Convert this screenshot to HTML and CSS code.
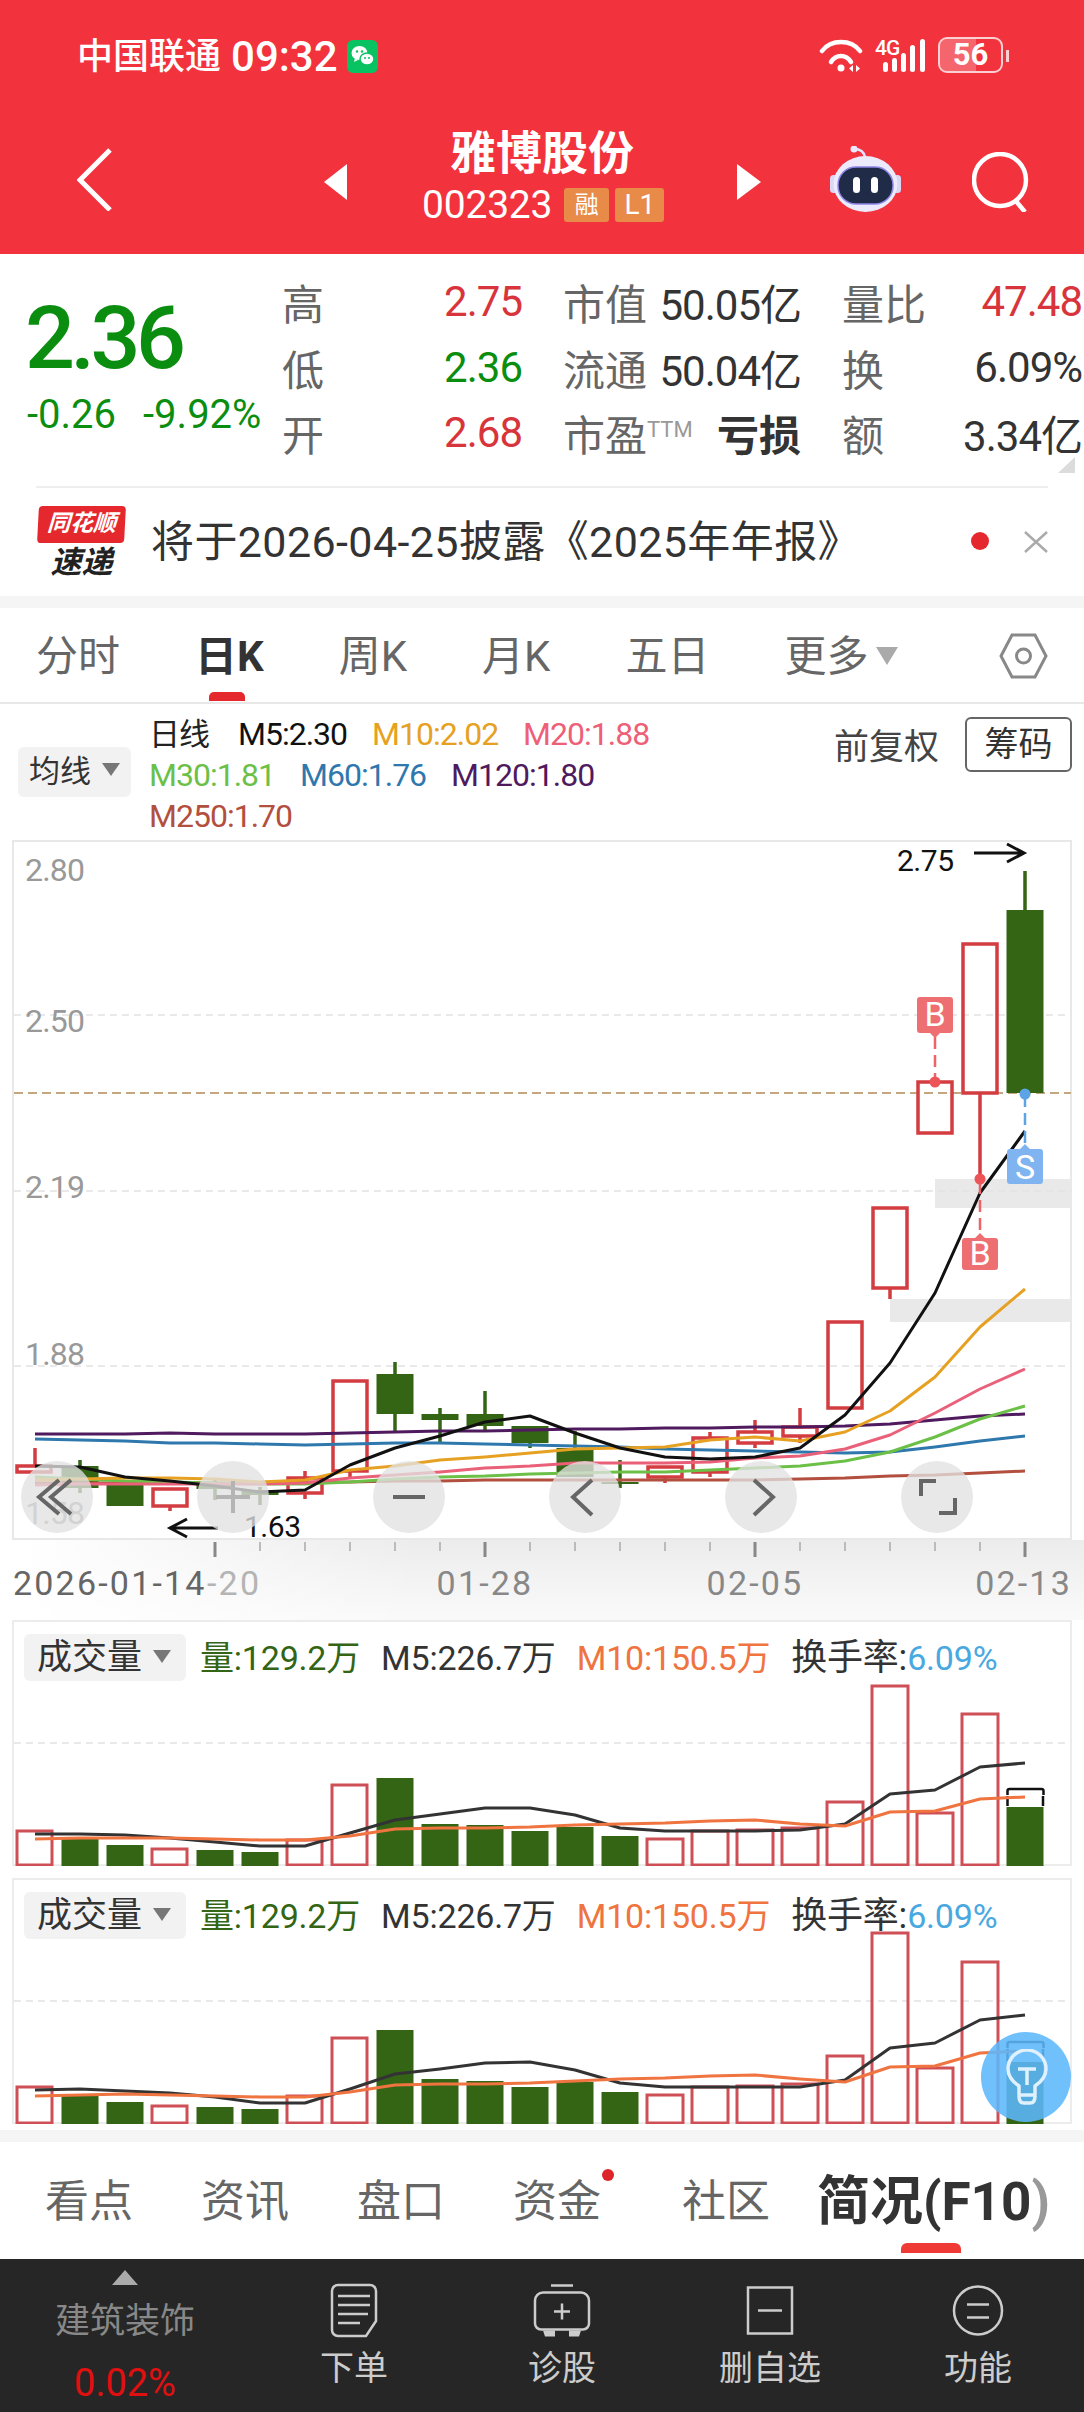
FILE: index.html
```html
<!DOCTYPE html>
<html lang="zh-CN">
<head>
  <meta charset="UTF-8" />
  <title>雅博股份</title>
  <link rel="stylesheet" href="styles.css">
</head>
<body>
  <header class="header">
    <div class="status">
      <span class="carrier">中国联通</span>
      <span class="clock">09:32</span>
      <svg class="wechat" viewBox="0 0 31 33">
        <rect width="31" height="33" rx="6" fill="#09c262"/>
        <ellipse cx="12.5" cy="13" rx="8" ry="7" fill="#fff"/>
        <path d="M8 18l-1 4 4-2z" fill="#fff"/>
        <ellipse cx="20" cy="19" rx="7" ry="6" fill="#fff" stroke="#09c262" stroke-width="1.5"/>
        <circle cx="10" cy="11.5" r="1.2" fill="#09c262"/><circle cx="15" cy="11.5" r="1.2" fill="#09c262"/>
        <circle cx="18" cy="18" r="1" fill="#09c262"/><circle cx="22" cy="18" r="1" fill="#09c262"/>
      </svg>
      <div class="status-right">
        <svg class="wifi" viewBox="0 0 44 34" fill="none" stroke="#fff" stroke-width="4.500" stroke-linecap="round">
          <path d="M3 12C12 0 32 0 41 12"/>
          <path d="M12 23C17 15 27 15 32 23"/>
          <circle cx="22" cy="29" r="3.500" fill="#fff" stroke="none"/>
          <path d="M34 26v7l-4-3.500zM37 26v7l4-3.500z" fill="#fff" stroke="none"/>
        </svg>
        <div class="signal">
          <span class="net">4G</span>
          <svg viewBox="0 0 52 34" fill="#fff">
            <rect x="8" y="23" width="5" height="10" rx="2.500"/>
            <rect x="17" y="19" width="5" height="14" rx="2.500"/>
            <rect x="26" y="14" width="5" height="19" rx="2.500"/>
            <rect x="35" y="6" width="5" height="27" rx="2.500"/>
            <rect x="45" y="0" width="5" height="33" rx="2.500"/>
          </svg>
        </div>
        <div class="battery"><span class="battery-fill"></span><span class="battery-num">56</span></div>
        <span class="battery-tip"></span>
      </div>
    </div>
    <div class="nav">
      <svg class="back" viewBox="0 0 35 63" fill="none" stroke="#fff" stroke-width="5"><path d="M33 2L3 32l30 30"/></svg>
      <span class="tri tri-left"></span>
      <div class="title-box">
        <div class="stock-name">雅博股份</div>
        <div class="stock-code">002323<span class="tag">融</span><span class="tag tag-l1">L1</span></div>
      </div>
      <span class="tri tri-right"></span>
      <svg class="robot" viewBox="0 0 71 66">
        <path d="M24 3c6 0 10 3 11 8" fill="none" stroke="#e6e3ff" stroke-width="2.500"/>
        <circle cx="24" cy="3" r="3.500" fill="#ece9ff"/>
        <rect x="0" y="29" width="8" height="18" rx="3.500" fill="#d9d6f6"/>
        <rect x="63" y="29" width="8" height="18" rx="3.500" fill="#d9d6f6"/>
        <ellipse cx="35.500" cy="38" rx="32" ry="28" fill="#ecebfb"/>
        <rect x="8" y="21" width="55" height="37" rx="18" fill="#202b47" stroke="#8f86e8" stroke-width="1.500"/>
        <rect x="23" y="31" width="7" height="16" rx="3.500" fill="#fff"/>
        <rect x="41" y="31" width="7" height="16" rx="3.500" fill="#fff"/>
      </svg>
      <svg class="search" viewBox="0 0 57 60" fill="none" stroke="#fff" stroke-width="4.500"><circle cx="28" cy="28" r="26"/><path d="M43 48l10 12"/></svg>
    </div>
  </header>

  <section class="quote">
    <div class="price-col">
      <div class="price">2.36</div>
      <div class="change"><span>-0.26</span><span>-9.92%</span></div>
    </div>
    <div class="stats">
      <div class="stat"><span class="label">高</span><span class="val red">2.75</span></div>
      <div class="stat"><span class="label">市值</span><span class="val">50.05亿</span></div>
      <div class="stat"><span class="label">量比</span><span class="val red">47.48</span></div>
      <div class="stat"><span class="label">低</span><span class="val green">2.36</span></div>
      <div class="stat"><span class="label">流通</span><span class="val">50.04亿</span></div>
      <div class="stat"><span class="label">换</span><span class="val">6.09%</span></div>
      <div class="stat"><span class="label">开</span><span class="val red">2.68</span></div>
      <div class="stat"><span class="label">市盈<sup class="ttm">TTM</sup></span><span class="val strong">亏损</span></div>
      <div class="stat"><span class="label">额</span><span class="val">3.34亿</span></div>
    </div>
    <span class="corner"></span>
  </section>

  <section class="flash">
    <div class="flash-logo">
      <div class="flash-top">同花顺</div>
      <div class="flash-bottom">速递</div>
    </div>
    <div class="flash-text">将于2026-04-25披露《2025年年报》</div>
    <span class="flash-dot"></span>
    <svg class="flash-close" viewBox="0 0 26 22" fill="none" stroke="#aaa" stroke-width="2.500"><path d="M2 1l22 20M24 1L2 21"/></svg>
  </section>

  <nav class="periods">
    <span class="period">分时</span>
    <span class="period active">日K</span>
    <span class="period">周K</span>
    <span class="period">月K</span>
    <span class="period">五日</span>
    <span class="period">更多<i class="caret"></i></span>
    <svg class="hex" viewBox="0 0 49 46" fill="none" stroke="#888" stroke-width="3"><path d="M13 2h23l11 21-11 21H13L2 23z"/><circle cx="24.500" cy="23" r="7"/></svg>
  </nav>

  <section class="legend">
    <div class="chip chip-ma">均线<i class="caret dark"></i></div>
    <div class="ma-list">
      <span class="ma ma-title">日线</span>
      <span class="ma c5">M5:2.30</span>
      <span class="ma c10">M10:2.02</span>
      <span class="ma c20">M20:1.88</span>
      <span class="ma c30">M30:1.81</span>
      <span class="ma c60">M60:1.76</span>
      <span class="ma c120">M120:1.80</span>
      <span class="ma c250">M250:1.70</span>
    </div>
    <span class="adjust">前复权</span>
    <span class="chips-btn">筹码</span>
  </section>

  <section class="chart">
    <svg class="kline" viewBox="14 842 1056 696" width="1056" height="696">
      <rect class="band" x="935" y="1179" width="137" height="29"/>
      <rect class="band" x="890" y="1299" width="182" height="23"/>
      <path class="grid" d="M14 1015H1071M14 1191H1071M14 1366H1071"/>
      <path class="last-line" d="M14 1093H1071"/>

      <text class="axis" x="25" y="881">2.80</text>
      <text class="axis" x="25" y="1032">2.50</text>
      <text class="axis" x="25" y="1198">2.19</text>
      <text class="axis" x="25" y="1365">1.88</text>
      <text class="axis" x="25" y="1524">1.58</text>

      <!-- 阴线 -->
      <path class="wick-down" d="M80 1460V1493M215 1480V1500M260 1487V1505M395 1362V1432M440 1408V1442M485 1391V1430M530 1426V1448M575 1431V1477M620 1460V1488M1025 871V910"/>
      <rect class="down" x="61.500" y="1466" width="37" height="22"/>
      <rect class="down" x="106.500" y="1485" width="37" height="21"/>
      <rect class="down" x="196.500" y="1485" width="37" height="4"/>
      <rect class="down" x="241.500" y="1490" width="37" height="5"/>
      <rect class="down" x="376.500" y="1374" width="37" height="40"/>
      <rect class="down" x="421.500" y="1414" width="37" height="6"/>
      <rect class="down" x="466.500" y="1414" width="37" height="12"/>
      <rect class="down" x="511.500" y="1426" width="37" height="17"/>
      <rect class="down" x="556.500" y="1448" width="37" height="29"/>
      <rect class="down" x="601.500" y="1482" width="37" height="2"/>
      <rect class="down" x="1006.500" y="910" width="37" height="183"/>

      <!-- 阳线 -->
      <path class="wick-up" d="M35 1448V1465M170 1507V1511M305 1471V1477M305 1494V1499M350 1471V1477M665 1477V1483M710 1432V1437M710 1472V1477M755 1420V1431M755 1443V1448M800 1408V1426M800 1436V1443M890 1288V1299M980 1093V1180"/>
      <rect class="up" x="17" y="1466" width="34" height="6"/>
      <rect class="up" x="153" y="1489" width="34" height="17"/>
      <rect class="up" x="288" y="1478" width="34" height="15"/>
      <rect class="up" x="333" y="1381" width="34" height="90"/>
      <rect class="up" x="648" y="1467" width="34" height="10"/>
      <rect class="up" x="693" y="1438" width="34" height="34"/>
      <rect class="up" x="738" y="1432" width="34" height="11"/>
      <rect class="up" x="783" y="1427" width="34" height="9"/>
      <rect class="up" x="828" y="1322" width="34" height="86"/>
      <rect class="up" x="873" y="1208" width="34" height="80"/>
      <rect class="up" x="918" y="1082" width="34" height="51"/>
      <rect class="up" x="963" y="944" width="34" height="149"/>

      <!-- 均线 -->
      <polyline class="line l250" points="35,1483 80,1483 125,1483 170,1483 215,1483 260,1483 305,1482 350,1482 395,1481 440,1481 485,1480 530,1480 575,1480 620,1480 665,1480 710,1480 755,1480 800,1479 845,1478 890,1476 935,1475 980,1473 1025,1471"/>
      <polyline class="line l120" points="35,1434 80,1434 125,1434 170,1433 215,1434 260,1434 305,1434 350,1433 395,1432 440,1431 485,1431 530,1430 575,1429 620,1429 665,1428 710,1428 755,1427 800,1427 845,1426 890,1424 935,1420 980,1416 1025,1414"/>
      <polyline class="line l60" points="35,1439 80,1440 125,1441 170,1443 215,1443 260,1444 305,1445 350,1444 395,1443 440,1443 485,1444 530,1445 575,1446 620,1447 665,1449 710,1450 755,1451 800,1452 845,1453 890,1452 935,1447 980,1441 1025,1436"/>
      <polyline class="line l30" points="35,1477 80,1479 125,1481 170,1482 215,1483 260,1484 305,1484 350,1482 395,1479 440,1477 485,1476 530,1474 575,1473 620,1472 665,1472 710,1470 755,1468 800,1466 845,1461 890,1452 935,1437 980,1419 1025,1406"/>
      <polyline class="line l20" points="35,1485 80,1484 125,1484 170,1484 215,1484 260,1484 305,1483 350,1478 395,1475 440,1472 485,1468 530,1466 575,1463 620,1463 665,1463 710,1462 755,1458 800,1456 845,1449 890,1435 935,1413 980,1389 1025,1369"/>
      <polyline class="line l10" points="35,1480 80,1479 125,1478 170,1478 215,1479 260,1482 305,1480 350,1470 395,1466 440,1460 485,1457 530,1453 575,1449 620,1448 665,1447 710,1440 755,1437 800,1441 845,1432 890,1411 935,1377 980,1327 1025,1289"/>
      <polyline class="line l5" points="35,1466 80,1467 125,1477 170,1481 215,1486 260,1492 305,1490 350,1465 395,1448 440,1436 485,1422 530,1416 575,1433 620,1448 665,1457 710,1459 755,1457 800,1448 845,1415 890,1363 935,1293 980,1193 1025,1131"/>

      <!-- 买卖点 -->
      <path class="pin-line red-pin" d="M935 1037V1080M980 1182V1232"/>
      <path class="pin-line blue-pin" d="M1025 1095V1144"/>
      <circle class="pin-dot" cx="935" cy="1082" r="5.500"/>
      <circle class="pin-dot" cx="980" cy="1179" r="5.500"/>
      <circle class="pin-dot blue" cx="1025" cy="1094" r="5.500"/>
      <path class="pin-b" d="M920 997h30a3 3 0 0 1 3 3v30a3 3 0 0 1-3 3h-10l-5 5-5-5h-10a3 3 0 0 1-3-3v-30a3 3 0 0 1 3-3z"/>
      <text class="pin-text" x="935" y="1026">B</text>
      <path class="pin-b" d="M965 1238h10l5-5 5 5h10a3 3 0 0 1 3 3v26a3 3 0 0 1-3 3h-30a3 3 0 0 1-3-3v-26a3 3 0 0 1 3-3z"/>
      <text class="pin-text" x="980" y="1265">B</text>
      <path class="pin-s" d="M1010 1149h10l5-5 5 5h10a3 3 0 0 1 3 3v29a3 3 0 0 1-3 3h-30a3 3 0 0 1-3-3v-29a3 3 0 0 1 3-3z"/>
      <text class="pin-text" x="1025" y="1179">S</text>

      <!-- 最高最低 -->
      <text class="extreme" x="897" y="871">2.75</text>
      <path class="arrow" d="M974 853H1024M1007 844l17 9-17 9"/>
      <text class="extreme" x="244" y="1537">1.63</text>
      <path class="arrow" d="M218 1528H170M187 1519l-17 9 17 9"/>
    </svg>

    <div class="zoom-btns">
      <span class="zoom-btn"><svg viewBox="0 0 72 72"><path d="M38 19L18 36l20 17M50 19L30 36l20 17"/></svg></span>
      <span class="zoom-btn"><svg class="off" viewBox="0 0 72 72"><path d="M36 20V52M19 36H53"/></svg></span>
      <span class="zoom-btn"><svg viewBox="0 0 72 72"><path d="M20 36H52"/></svg></span>
      <span class="zoom-btn"><svg viewBox="0 0 72 72"><path d="M43 19L24 36l19 18"/></svg></span>
      <span class="zoom-btn"><svg viewBox="0 0 72 72"><path d="M29 19l19 17-19 18"/></svg></span>
      <span class="zoom-btn"><svg viewBox="0 0 72 72"><path d="M35 20H20V35M38 52H54V37"/></svg></span>
    </div>
  </section>

  <div class="xaxis">
    <svg viewBox="0 1540 1084 80" width="1084" height="80">
      <path class="tick" d="M260 1542V1551M305 1542V1551M350 1542V1551M395 1542V1551M440 1542V1551M530 1542V1551M575 1542V1551M620 1542V1551M665 1542V1551M710 1542V1551M800 1542V1551M845 1542V1551M890 1542V1551M935 1542V1551M980 1542V1551"/>
      <path class="tick long" d="M215 1542V1557M485 1542V1557M755 1542V1557M1025 1542V1557"/>
      <text class="date faded" x="207" y="1595">-20</text>
      <text class="date dark-date" x="13" y="1595">2026-01-14</text>
      <text class="date mid" x="485" y="1595">01-28</text>
      <text class="date mid" x="755" y="1595">02-05</text>
      <text class="date end" x="1072" y="1595">02-13</text>
    </svg>
  </div>

  <section class="vol">
    <svg class="vol-chart" viewBox="14 1622 1056 244" width="1056" height="244">
      <path class="grid" d="M14 1743H1071"/>
      <path class="vol-down" d="M61.500 1839h37v27h-37zM106.500 1845h37v21h-37zM196.500 1850h37v16h-37zM241.500 1852h37v14h-37zM376.500 1778h37v88h-37zM421.500 1824h37v42h-37zM466.500 1825h37v41h-37zM511.500 1831h37v35h-37zM556.500 1827h37v39h-37zM601.500 1836h37v30h-37zM1006.500 1807h37v59h-37z"/>
      <path class="vol-up" d="M17 1831h35v34H17zM152 1849h35v16h-35zM287 1840h35v25h-35zM332 1785h35v80h-35zM647 1839h36v26h-36zM692 1831h36v34h-36zM737 1830h36v35h-36zM782 1828h36v37h-36zM827 1802h36v63h-36zM872 1686h36v179h-36zM917 1813h36v52h-36zM962 1714h36v151h-36z"/>
      <path class="bracket" d="M1007.500 1795v-4a2 2 0 0 1 2-2h32a2 2 0 0 1 2 2v4M1007.500 1796v10M1043 1796v10"/>
      <polyline class="vline vl-m5" points="35,1834 80,1834 125,1835 170,1838 215,1842 260,1846 305,1846 350,1833 395,1820 440,1814 485,1808 530,1808 575,1815 620,1828 665,1831 710,1831 755,1831 800,1830 845,1824 890,1794 935,1790 980,1767 1025,1763"/>
      <polyline class="vline vl-m10" points="35,1839 80,1838 125,1838 170,1838 215,1839 260,1840 305,1840 350,1836 395,1829 440,1828 485,1828 530,1827 575,1825 620,1824 665,1823 710,1821 755,1820 800,1824 845,1826 890,1812 935,1811 980,1799 1025,1797"/>
    </svg>
    <div class="vol-head">
      <div class="chip chip-vol">成交量<i class="caret dark"></i></div>
      <span class="v-item v-green">量:129.2万</span>
      <span class="v-item">M5:226.7万</span>
      <span class="v-item v-orange">M10:150.5万</span>
      <span class="v-item v-rate">换手率:<em class="v-blue">6.09%</em></span>
    </div>
  </section>

  <section class="vol vol-second">
    <svg class="vol-chart" viewBox="14 1880 1056 244" width="1056" height="244">
      <path class="grid" d="M14 2001H1071"/>
      <path class="vol-down" d="M61.500 2096h37v28h-37zM106.500 2102h37v22h-37zM196.500 2107h37v17h-37zM241.500 2109h37v15h-37zM376.500 2030h37v94h-37zM421.500 2079h37v45h-37zM466.500 2081h37v43h-37zM511.500 2087h37v37h-37zM556.500 2082h37v42h-37zM601.500 2092h37v32h-37zM1006.500 2062h37v62h-37z"/>
      <path class="vol-up" d="M17 2087h35v36H17zM152 2106h35v17h-35zM287 2096h35v27h-35zM332 2038h35v85h-35zM647 2095h36v28h-36zM692 2087h36v36h-36zM737 2086h36v37h-36zM782 2084h36v39h-36zM827 2056h36v67h-36zM872 1933h36v190h-36zM917 2068h36v55h-36zM962 1962h36v161h-36z"/>
      <path class="bracket" d="M1007.500 2048v-4a2 2 0 0 1 2-2h32a2 2 0 0 1 2 2v4M1007.500 2049v12M1043 2049v12"/>
      <polyline class="vline vl-m5" points="35,2090 80,2089 125,2091 170,2093 215,2097 260,2103 305,2103 350,2089 395,2074 440,2069 485,2063 530,2062 575,2070 620,2083 665,2087 710,2087 755,2087 800,2087 845,2080 890,2048 935,2043 980,2020 1025,2015"/>
      <polyline class="vline vl-m10" points="35,2096 80,2095 125,2094 170,2095 215,2096 260,2097 305,2097 350,2092 395,2085 440,2084 485,2084 530,2083 575,2081 620,2079 665,2078 710,2076 755,2075 800,2079 845,2082 890,2067 935,2066 980,2053 1025,2051"/>
    </svg>
    <div class="vol-head">
      <div class="chip chip-vol">成交量<i class="caret dark"></i></div>
      <span class="v-item v-green">量:129.2万</span>
      <span class="v-item">M5:226.7万</span>
      <span class="v-item v-orange">M10:150.5万</span>
      <span class="v-item v-rate">换手率:<em class="v-blue">6.09%</em></span>
    </div>
    <span class="bulb">
      <svg viewBox="0 0 42 56" fill="none" stroke="#dff1ff" stroke-width="3.500" stroke-linejoin="round">
        <path d="M13 46V37C7 33 2 28 2 20A19 19 0 0 1 40 20C40 28 35 33 29 37V46z"/>
        <path d="M12 20H30M21 20V36"/>
        <path d="M13 47c0 5 2 7 5 7h6c3 0 5-2 5-7"/>
      </svg>
    </span>
  </section>

  <div class="gap"></div>

  <nav class="subtabs">
    <span class="subtab">看点</span>
    <span class="subtab">资讯</span>
    <span class="subtab">盘口</span>
    <span class="subtab dotted">资金</span>
    <span class="subtab">社区</span>
    <span class="subtab current">简况(F10<span class="fade">)</span></span>
  </nav>

  <footer class="toolbar">
    <div class="sector">
      <span class="sector-up"></span>
      <span class="sector-name">建筑装饰</span>
      <span class="sector-rate">0.02%</span>
    </div>
    <div class="tool">
      <svg class="tool-icon" width="48" height="55" viewBox="0 0 48 55"><path d="M8 2h32a6 6 0 0 1 6 6v30L36 53H8a6 6 0 0 1-6-6V8a6 6 0 0 1 6-6z"/><path d="M8 13H40M8 22H40M8 31H38M8 40H30"/></svg>
      <span>下单</span>
    </div>
    <div class="tool">
      <svg class="tool-icon" width="58" height="54" viewBox="0 0 58 54"><path d="M18 2H40"/><path d="M10 9H48a8 8 0 0 1 8 8V40a6 6 0 0 1-6 6H8a6 6 0 0 1-6-6V17a8 8 0 0 1 8-8z"/><path d="M29 20V36M21 28H37"/><path class="solid" d="M10 47h12v6H12zM36 47h12l-2 6H36z"/></svg>
      <span>诊股</span>
    </div>
    <div class="tool">
      <svg class="tool-icon" width="48" height="50" viewBox="0 0 48 50"><rect x="2" y="2" width="44" height="46"/><path d="M12 25H36"/></svg>
      <span>删自选</span>
    </div>
    <div class="tool">
      <svg class="tool-icon" width="52" height="52" viewBox="0 0 52 52"><circle cx="26" cy="26" r="24"/><path d="M15 20H37M15 33H37"/></svg>
      <span>功能</span>
    </div>
  </footer>
</body>
</html>
```

FILE: styles.css
```css
* {
  box-sizing: border-box;
}

body {
  margin: 0;
  width: 1084px;
  height: 2412px;
  overflow: hidden;
  background: #fff;
  color: #333;
  font-family: "Roboto", "Noto Sans CJK SC", sans-serif;
}

/* 顶部红色区域 */
.header {
  height: 254px;
  background: #f2323d;
  color: #fff;
}

.status {
  height: 114px;
  padding: 37px 75px 0 77px;
  display: flex;
  align-items: flex-start;
}

.carrier {
  font-size: 36px;
  line-height: 40px;
  font-weight: 500;
}

.clock {
  margin-left: 10px;
  font-size: 42px;
  line-height: 40px;
  font-weight: 500;
}

.wechat {
  width: 31px;
  height: 33px;
  margin: 3px 0 0 9px;
}

.status-right {
  margin-left: auto;
  display: flex;
  align-items: flex-start;
}

.wifi {
  width: 44px;
  height: 34px;
  margin-top: 2px;
}

.signal {
  position: relative;
  width: 52px;
  height: 34px;
  margin: 2px 0 0 12px;
}

.signal svg {
  width: 52px;
  height: 34px;
  display: block;
}

.net {
  position: absolute;
  left: 0;
  top: -1px;
  font-size: 21px;
  line-height: 20px;
  font-weight: 500;
  letter-spacing: -1px;
}

.battery {
  position: relative;
  width: 65px;
  height: 36px;
  margin-left: 11px;
  border: 2px solid #fbd0d2;
  border-radius: 9px;
  text-align: center;
}

.battery-fill {
  position: absolute;
  left: 0;
  top: 0;
  bottom: 0;
  width: 36px;
  border-radius: 7px 0 0 7px;
  background: rgba(255, 255, 255, 0.25);
}

.battery-num {
  position: relative;
  display: block;
  font-size: 31px;
  line-height: 32px;
  font-weight: 700;
}

.battery-tip {
  width: 3px;
  height: 12px;
  margin: 13px 0 0 3px;
  background: #fbd0d2;
}

.nav {
  height: 140px;
  padding-left: 77px;
  display: flex;
}

.back {
  width: 35px;
  height: 63px;
  margin-top: 34px;
}

.tri {
  width: 0;
  height: 0;
  margin-top: 50px;
  border-top: 18px solid transparent;
  border-bottom: 18px solid transparent;
}

.tri-left {
  margin-left: 212px;
  border-right: 23px solid #fff;
}

.tri-right {
  border-left: 24px solid #fff;
}

.title-box {
  width: 390px;
  padding-left: 75px;
}

.stock-name {
  width: 190px;
  margin: 14px 0 0 28px;
  font-size: 46px;
  line-height: 50px;
  font-weight: 700;
}

.stock-code {
  display: flex;
  align-items: center;
  height: 36px;
  margin-top: 9px;
  font-size: 39px;
  letter-spacing: -0.200px;
}

.tag {
  width: 45px;
  height: 34px;
  margin-left: 12px;
  background: #e88b48;
  border-radius: 3px;
  color: #fff;
  font-size: 24px;
  line-height: 34px;
  text-align: center;
  letter-spacing: 0;
}

.tag-l1 {
  width: 49px;
  margin-left: 6px;
  font-size: 28px;
}

.robot {
  width: 71px;
  height: 66px;
  margin: 32px 0 0 69px;
}

.search {
  width: 57px;
  height: 60px;
  margin: 38px 0 0 71px;
}

/* 行情数据 */
.quote {
  position: relative;
  height: 234px;
  display: flex;
  background: linear-gradient(#eee, #eee) no-repeat 36px 232px / 1012px 2px;
}

.price-col {
  width: 282px;
  padding-left: 25px;
}

.price {
  height: 100px;
  margin-top: 38px;
  font-size: 88px;
  line-height: 92px;
  font-weight: 500;
  letter-spacing: -4.500px;
  color: #0b8e10;
}

.change {
  margin-top: 3px;
  padding-left: 2px;
  display: flex;
  gap: 27px;
  font-size: 40px;
  line-height: 40px;
  color: #0b8e10;
}

.stats {
  width: 802px;
  margin-top: 15px;
  display: grid;
  grid-template-columns: 240px 238px 240px;
  grid-auto-rows: 65.500px;
  column-gap: 41px;
}

.stat {
  display: flex;
  justify-content: space-between;
  align-items: center;
}

.label {
  font-size: 42px;
  color: #666;
  white-space: nowrap;
}

.ttm {
  font-size: 22px;
  color: #999;
  vertical-align: 14px;
  line-height: 0;
}

.val {
  font-size: 42px;
  letter-spacing: -1px;
  color: #333;
  white-space: nowrap;
}

.val.strong {
  font-weight: 700;
  letter-spacing: 0;
}

.red {
  color: #d8343b;
}

.green {
  color: #0b8e10;
}

.corner {
  position: absolute;
  right: 9px;
  top: 203px;
  width: 0;
  height: 0;
  border-left: 17px solid transparent;
  border-bottom: 16px solid #dcdcdc;
}

/* 速递 */
.flash {
  height: 120px;
  padding: 18px 35px 0 38px;
  display: flex;
  border-bottom: 12px solid #f5f5f5;
}

.flash-logo {
  width: 87px;
  height: 71px;
}

.flash-top {
  height: 37px;
  background: #e5282e;
  border-radius: 4px;
  color: #fff;
  font-size: 23px;
  line-height: 36px;
  font-weight: 700;
  font-style: italic;
  text-align: center;
  transform: skewX(-3deg);
}

.flash-bottom {
  margin-top: 3px;
  font-size: 31px;
  line-height: 34px;
  font-weight: 700;
  font-style: italic;
  text-align: center;
  color: #222;
}

.flash-text {
  margin: 11px 0 0 26px;
  font-size: 43px;
  line-height: 50px;
  letter-spacing: 0.400px;
  color: #333;
  white-space: nowrap;
}

.flash-dot {
  width: 18px;
  height: 18px;
  margin: 26px 0 0 auto;
  border-radius: 50%;
  background: #e5282e;
}

.flash-close {
  width: 26px;
  height: 22px;
  margin: 25px 0 0 34px;
}

/* 周期切换 */
.periods {
  position: relative;
  height: 96px;
  padding: 3px 0 0 36px;
  display: flex;
  align-items: center;
  gap: 75px;
  border-bottom: 2px solid #e8e8e8;
}

.period {
  font-size: 42px;
  line-height: 50px;
  color: #666;
  white-space: nowrap;
}

.period.active {
  position: relative;
  font-weight: 700;
  color: #333;
}

.period.active::after {
  content: "";
  position: absolute;
  left: 14px;
  bottom: -19px;
  width: 36px;
  height: 9px;
  border-radius: 5px 5px 0 0;
  background: #e5282e;
}

.caret {
  display: inline-block;
  width: 0;
  height: 0;
  margin-left: 8px;
  vertical-align: 6px;
  border-left: 11px solid transparent;
  border-right: 11px solid transparent;
  border-top: 18px solid #aaa;
}

.caret.dark {
  margin-left: 11px;
  border-left-width: 9px;
  border-right-width: 9px;
  border-top: 13px solid #777;
}

.hex {
  position: absolute;
  right: 36px;
  top: 25px;
  width: 49px;
  height: 46px;
}

/* 均线图例 */
.legend {
  height: 136px;
  padding: 0 12px 0 18px;
  display: flex;
  align-items: flex-start;
}

.chip {
  background: #f2f2f2;
  border-radius: 6px;
  white-space: nowrap;
}

.chip-ma {
  width: 113px;
  height: 50px;
  margin-top: 43px;
  padding-left: 11px;
  font-size: 31px;
  line-height: 50px;
  color: #333;
}

.ma-list {
  width: 535px;
  margin: 10px 0 0 18px;
  display: flex;
  flex-wrap: wrap;
  column-gap: 25px;
}

.ma {
  font-size: 32px;
  line-height: 41px;
  letter-spacing: -1px;
  white-space: nowrap;
}

.ma-title {
  margin-right: 4px;
  font-size: 31px;
  color: #222;
}

.c5 { color: #111; }
.c10 { color: #e6a122; }
.c20 { color: #ee5f78; }
.c30 { color: #6cc048; }
.c60 { color: #2f78ad; }
.c120 { color: #4f1a5e; }
.c250 { color: #b24f3e; }

.adjust {
  margin: 24px 0 0 auto;
  font-size: 35px;
  line-height: 40px;
  color: #444;
  white-space: nowrap;
}

.chips-btn {
  width: 107px;
  height: 55px;
  margin: 13px 0 0 26px;
  border: 2px solid #666;
  border-radius: 6px;
  font-size: 34px;
  line-height: 50px;
  text-align: center;
  color: #333;
}

/* K线图 */
.chart {
  position: relative;
  width: 1060px;
  height: 700px;
  margin-left: 12px;
  border: 2px solid #e8e8e8;
}

.kline {
  display: block;
  overflow: visible;
}

.band {
  fill: #e9e9e9;
}

.grid {
  fill: none;
  stroke: #e2e2e2;
  stroke-width: 1.500;
  stroke-dasharray: 7 5;
}

.last-line {
  fill: none;
  stroke: #c4a67f;
  stroke-width: 2;
  stroke-dasharray: 9 5;
}

.axis {
  font-size: 32px;
  letter-spacing: -0.800px;
  fill: #999;
}

.down {
  fill: #336514;
}

.wick-down {
  fill: none;
  stroke: #336514;
  stroke-width: 3.500;
}

.up {
  fill: none;
  stroke: #d33c40;
  stroke-width: 3.500;
}

.wick-up {
  fill: none;
  stroke: #d33c40;
  stroke-width: 3.500;
}

.line {
  fill: none;
  stroke-width: 3;
  stroke-linejoin: round;
}

.l5 { stroke: #111; }
.l10 { stroke: #e6a122; }
.l20 { stroke: #ea6079; }
.l30 { stroke: #6cc048; }
.l60 { stroke: #2f78ad; }
.l120 { stroke: #4f1a5e; }
.l250 { stroke: #b24f3e; }

.pin-line {
  fill: none;
  stroke-width: 2.500;
  stroke-dasharray: 12 6;
}

.red-pin {
  stroke: #ec6468;
}

.blue-pin {
  stroke: #5da4e6;
}

.pin-dot {
  fill: #ec5458;
}

.pin-dot.blue {
  fill: #5da4e6;
}

.pin-b {
  fill: #ee6f72;
}

.pin-s {
  fill: #7fb4f0;
}

.pin-text {
  font-size: 34px;
  fill: #fff;
  text-anchor: middle;
}

.extreme {
  font-size: 30px;
  letter-spacing: -0.500px;
  fill: #111;
}

.arrow {
  fill: none;
  stroke: #111;
  stroke-width: 3;
}

.zoom-btns {
  position: absolute;
  left: 7px;
  top: 619px;
  display: flex;
  gap: 104px;
}

.zoom-btn {
  width: 72px;
  height: 72px;
  border-radius: 50%;
  background: rgba(226, 226, 226, 0.78);
}

.zoom-btn svg {
  display: block;
  fill: none;
  stroke: #666;
  stroke-width: 4;
}

.zoom-btn svg.off {
  stroke: #b4b4b4;
}

/* 时间轴 */
.xaxis {
  height: 80px;
  background:
    linear-gradient(90deg, #fff 20px, rgba(255, 255, 255, 0) 420px),
    linear-gradient(#ececec, #fafafa);
}

.xaxis svg {
  display: block;
}

.tick {
  fill: none;
  stroke: #bbb;
  stroke-width: 2;
}

.tick.long {
  stroke: #888;
  stroke-width: 3;
}

.date {
  font-size: 34px;
  letter-spacing: 2.200px;
  fill: #888;
}

.dark-date {
  fill: #666;
}

.faded {
  fill: #b4b4b4;
}

.mid {
  text-anchor: middle;
}

.end {
  text-anchor: end;
}

/* 成交量 */
.vol {
  position: relative;
  width: 1060px;
  height: 246px;
  margin: 0 0 12px 12px;
  border: 2px solid #ececec;
  background: #fff;
}

.vol-second {
  margin-bottom: 6px;
}

.vol-chart {
  position: absolute;
  left: 0;
  top: 0;
}

.vol-down {
  fill: #336514;
}

.vol-up {
  fill: none;
  stroke: #cf4f56;
  stroke-width: 3;
}

.bracket {
  fill: none;
  stroke: #111;
  stroke-width: 2.500;
}

.vline {
  fill: none;
  stroke-width: 3;
  stroke-linejoin: round;
}

.vl-m5 {
  stroke: #333;
}

.vl-m10 {
  stroke: #ef7440;
}

.vol-head {
  position: relative;
  padding: 10px 0 0 10px;
  display: flex;
  align-items: center;
  gap: 21px;
}

.chip-vol {
  width: 162px;
  height: 47px;
  margin-right: -7px;
  padding-left: 13px;
  font-size: 35px;
  line-height: 47px;
  color: #333;
}

.v-item {
  padding-top: 3px;
  font-size: 34px;
  line-height: 47px;
  letter-spacing: -0.200px;
  color: #333;
  white-space: nowrap;
}

.v-item em {
  font-size: 34px;
  font-style: normal;
}

.v-rate {
  font-size: 36px;
}

.v-green {
  color: #336514;
}

.v-orange {
  color: #ef7440;
}

.v-blue {
  color: #4aa8e0;
}

.bulb {
  position: absolute;
  left: 967px;
  top: 152px;
  width: 90px;
  height: 90px;
  padding: 17px 0 0 25px;
  border-radius: 50%;
  background: rgba(92, 183, 252, 0.88);
}

.bulb svg {
  display: block;
  width: 42px;
  height: 56px;
}

.gap {
  height: 12px;
  background: #f5f5f5;
}

/* 底部标签 */
.subtabs {
  position: relative;
  height: 117px;
  padding: 2px 0 0 45px;
  display: flex;
  align-items: center;
}

.subtab {
  margin-right: 68px;
  font-size: 44px;
  line-height: 50px;
  color: #666;
  white-space: nowrap;
}

.dotted {
  position: relative;
  margin-right: 81px;
}

.dotted::after {
  content: "";
  position: absolute;
  right: -13px;
  top: -8px;
  width: 12px;
  height: 12px;
  border-radius: 50%;
  background: #dd2429;
}

.current {
  position: relative;
  margin: 0 0 0 -21px;
  font-size: 53px;
  font-weight: 700;
  color: #333;
}

.fade {
  color: #999;
}

.current::after {
  content: "";
  position: absolute;
  left: 84px;
  bottom: -26px;
  width: 60px;
  height: 10px;
  border-radius: 6px 6px 0 0;
  background: #f03a35;
}

/* 底部工具栏 */
.toolbar {
  height: 153px;
  background: #262626;
  display: grid;
  grid-template-columns: 250px repeat(4, 208px);
}

.sector {
  display: flex;
  flex-direction: column;
  align-items: center;
}

.sector-up {
  width: 0;
  height: 0;
  margin-top: 11px;
  border-left: 13px solid transparent;
  border-right: 13px solid transparent;
  border-bottom: 15px solid #aaa;
}

.sector-name {
  margin-top: 15px;
  font-size: 35px;
  line-height: 44px;
  color: #888;
}

.sector-rate {
  margin-top: 17px;
  font-size: 38px;
  line-height: 44px;
  color: #e01010;
}

.tool {
  display: flex;
  flex-direction: column;
  align-items: center;
  padding-top: 24px;
  font-size: 34px;
  line-height: 44px;
  color: #ccc;
}

.tool-icon {
  height: 55px;
  margin-bottom: 8px;
  fill: none;
  stroke: #ccc;
  stroke-width: 2.500;
}

.tool-icon .solid {
  fill: #ccc;
  stroke: none;
}
```
